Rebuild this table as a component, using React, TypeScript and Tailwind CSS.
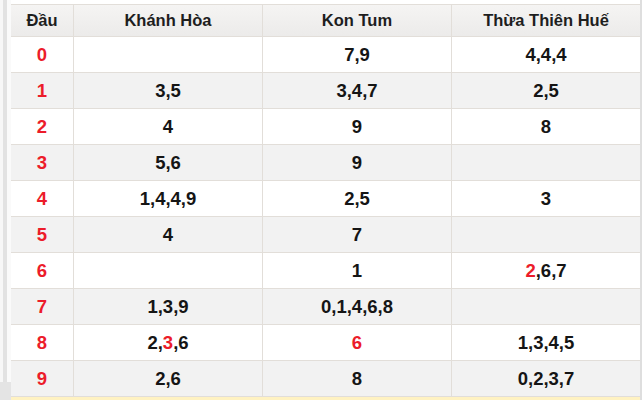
import React from 'react';

type Cell = { v: string; red?: number[] } | null;

const rows: { d: string; cols: (string | { parts: [string, boolean][] })[] }[] = [
  { d: '0', cols: ['', '7,9', '4,4,4'] },
  { d: '1', cols: ['3,5', '3,4,7', '2,5'] },
  { d: '2', cols: ['4', '9', '8'] },
  { d: '3', cols: ['5,6', '9', ''] },
  { d: '4', cols: ['1,4,4,9', '2,5', '3'] },
  { d: '5', cols: ['4', '7', ''] },
  { d: '6', cols: ['', '1', { parts: [['2', true], [',6,7', false]] }] },
  { d: '7', cols: ['1,3,9', '0,1,4,6,8', ''] },
  { d: '8', cols: [{ parts: [['2,', false], ['3', true], [',6', false]] }, { parts: [['6', true]] }, '1,3,4,5'] },
  { d: '9', cols: ['2,6', '8', '0,2,3,7'] },
];

const grid = 'grid grid-cols-[62px_189px_189px_189px]';

export default function App() {
  return (
    <div className="flex h-[400px] w-[642px] overflow-hidden bg-white font-['Liberation_Sans',Arial,sans-serif]">
      {/* left gutter */}
      <div className="flex w-[11px] shrink-0 flex-col">
        <div className="flex flex-1">
          <div className="w-[3px] bg-[#f7f7f7]" />
          <div className="w-[4px] bg-[#e2e2e2]" />
          <div className="flex-1 bg-[#fafafa]" />
        </div>
        <div className="h-[18px] bg-[#e4e4e4]" />
      </div>

      <div className="flex w-[629px] shrink-0 flex-col pt-[4px]">
        <div className={`${grid} h-[33px] border-y border-[#e2ded9] bg-gradient-to-b from-[#f5f4f3] to-[#ecebea] text-[16.5px] font-bold text-[#1e1e1e]`}>
          {['Đầu', 'Khánh Hòa', 'Kon Tum', 'Thừa Thiên Huế'].map((h, i) => (
            <div key={h} className={`flex items-center justify-center ${i > 0 ? 'border-l border-[#e2ded9]' : ''}`}>
              {h}
            </div>
          ))}
        </div>

        {rows.map((r, ri) => (
          <div
            key={r.d}
            className={`${grid} h-[36px] border-b border-[#e2ded9] text-[18.5px] font-bold text-[#151515] ${ri % 2 === 1 ? 'bg-[#f2f2f2]' : 'bg-white'}`}
          >
            <div className="flex items-center justify-center text-[#ec1c2a]">{r.d}</div>
            {r.cols.map((c, ci) => (
              <div key={ci} className="flex items-center justify-center border-l border-[#e2ded9]">
                {typeof c === 'string'
                  ? c
                  : c.parts.map(([t, red], pi) => (
                      <span key={pi} className={red ? 'text-[#ec1c2a]' : ''}>
                        {t}
                      </span>
                    ))}
              </div>
            ))}
          </div>
        ))}

        <div className="flex-1 bg-[#fff2c2]" />
      </div>

      <div className="w-[2px] shrink-0 bg-[#dedede]" />
    </div>
  );
}
